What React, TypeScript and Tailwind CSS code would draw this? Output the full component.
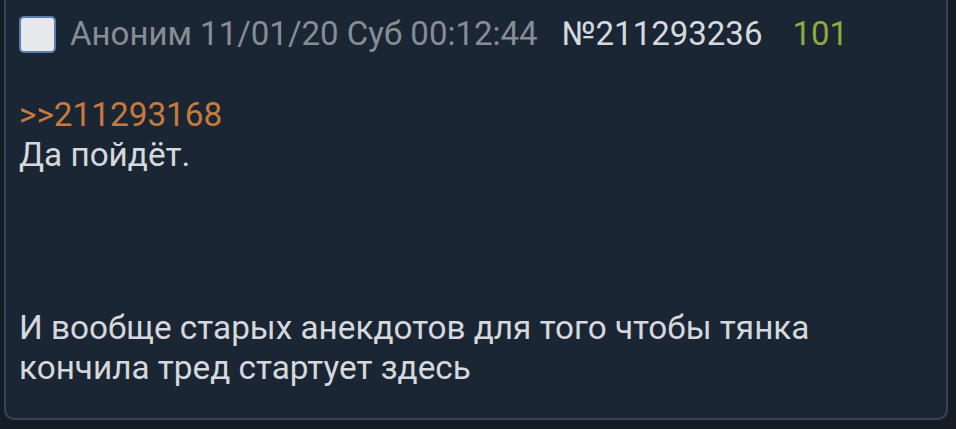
export default function App() {
  return (
    <div
      className="w-[956px] h-[429px] bg-[#141c26] overflow-hidden relative"
      style={{ fontFamily: "Roboto, 'Noto Sans', sans-serif" }}
    >
      <div className="ml-[4px] w-[944px] h-[424px] -mt-[4px] pt-[4px] bg-[#1b2634] border-2 border-[#394554] rounded-b-[10px] pl-[13px]">
        <div className="flex items-center h-[40px] mt-[12px] text-[33px] leading-[40px]">
          <div className="w-[37px] h-[37px] rounded-[5px] bg-[#e7e8eb] border-2 border-[#5b7eaf] shrink-0" />
          <span className="ml-[14px] text-[#878d95]">Аноним 11/01/20 Суб 00:12:44</span>
          <span className="ml-[24px] text-[#d6d9de]">№211293236</span>
          <span className="ml-[30px] text-[#8eab3b]">101</span>
        </div>
        <div className="mt-[41px] text-[33.3px] leading-[40px] text-[#d5d8dd]">
          <div className="text-[#c8793d]">&gt;&gt;211293168</div>
          <div>Да пойдёт.</div>
          <div className="mt-[133px]">И вообще старых анекдотов для того чтобы тянка</div>
          <div>кончила тред стартует здесь</div>
        </div>
      </div>
    </div>
  );
}
